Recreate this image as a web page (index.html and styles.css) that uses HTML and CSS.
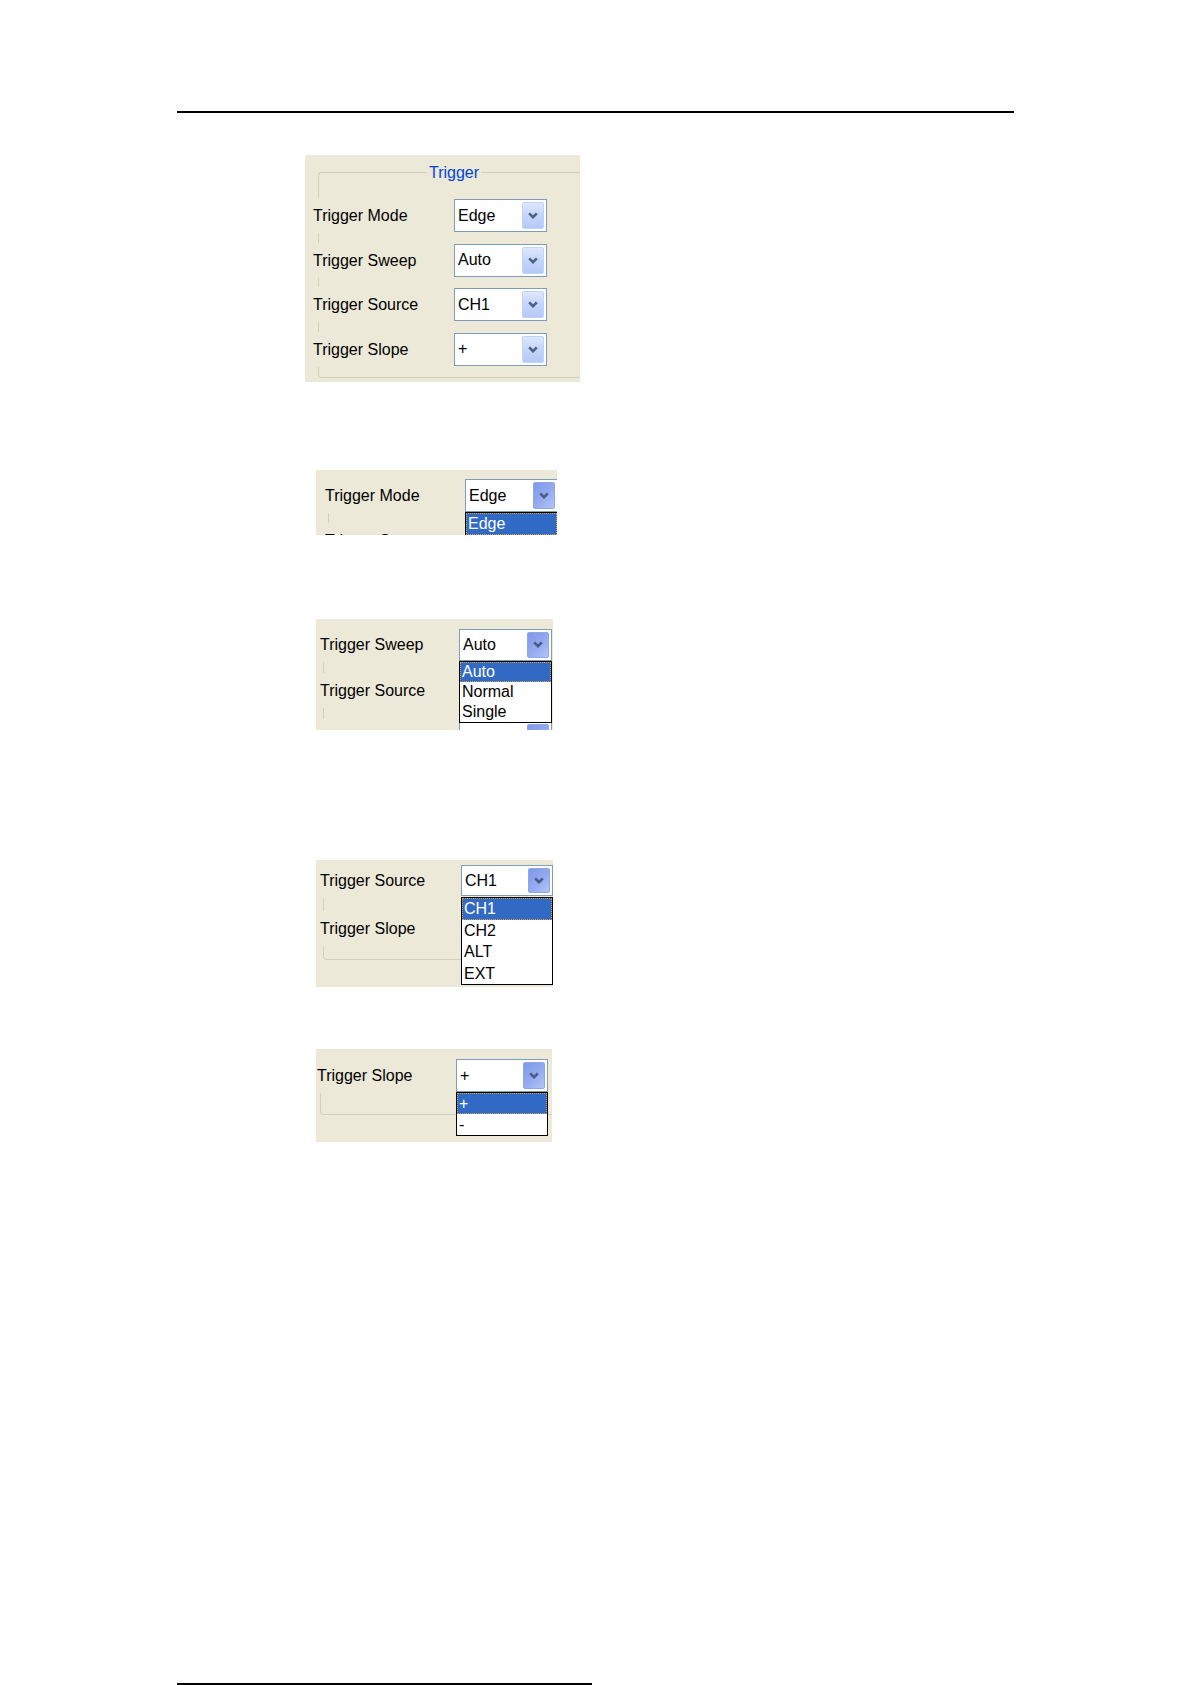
FILE: index.html
```html
<!DOCTYPE html>
<html>
<head>
<meta charset="utf-8">
<link rel="stylesheet" href="styles.css">
</head>
<body>
<div class="page">
  <div class="rule"></div>

  <div class="fig f1">
    <div class="gbox">
      <div class="gtitle">Trigger</div>
      <div class="rows">
        <div class="row"><span class="lbl">Trigger Mode</span><div class="sel"><span class="val">Edge</span><span class="btn"><svg width="10" height="7" viewBox="0 0 10 7"><polyline points="1.2,1.3 5,5.2 8.8,1.3" fill="none" stroke="#4d6185" stroke-width="2.6"/></svg></span></div></div>
        <div class="row"><span class="lbl">Trigger Sweep</span><div class="sel"><span class="val">Auto</span><span class="btn"><svg width="10" height="7" viewBox="0 0 10 7"><polyline points="1.2,1.3 5,5.2 8.8,1.3" fill="none" stroke="#4d6185" stroke-width="2.6"/></svg></span></div></div>
        <div class="row"><span class="lbl">Trigger Source</span><div class="sel"><span class="val">CH1</span><span class="btn"><svg width="10" height="7" viewBox="0 0 10 7"><polyline points="1.2,1.3 5,5.2 8.8,1.3" fill="none" stroke="#4d6185" stroke-width="2.6"/></svg></span></div></div>
        <div class="row"><span class="lbl">Trigger Slope</span><div class="sel"><span class="val">+</span><span class="btn"><svg width="10" height="7" viewBox="0 0 10 7"><polyline points="1.2,1.3 5,5.2 8.8,1.3" fill="none" stroke="#4d6185" stroke-width="2.6"/></svg></span></div></div>
      </div>
    </div>
  </div>

  <div class="fig f2">
    <div class="gbox">
      <div class="rows">
        <div class="row"><span class="lbl">Trigger Mode</span><div class="sel"><span class="val">Edge</span><span class="btn pressed"><svg width="10" height="7" viewBox="0 0 10 7"><polyline points="1.2,1.3 5,5.2 8.8,1.3" fill="none" stroke="#4a5c86" stroke-width="2.6"/></svg></span>
          <div class="list"><div class="opt on">Edge</div></div></div></div>
        <div class="row"><span class="lbl">Trigger Sweep</span><div class="sel"><span class="val">Auto</span><span class="btn"></span></div></div>
      </div>
    </div>
  </div>

  <div class="fig f3">
    <div class="gbox">
      <div class="rows">
        <div class="row"><span class="lbl">Trigger Sweep</span><div class="sel"><span class="val">Auto</span><span class="btn pressed"><svg width="10" height="7" viewBox="0 0 10 7"><polyline points="1.2,1.3 5,5.2 8.8,1.3" fill="none" stroke="#4a5c86" stroke-width="2.6"/></svg></span>
          <div class="list"><div class="opt on">Auto</div><div class="opt">Normal</div><div class="opt">Single</div></div></div></div>
        <div class="row"><span class="lbl">Trigger Source</span><div class="sel"><span class="val">CH1</span><span class="btn"></span></div></div>
        <div class="row"><span class="lbl">Trigger Slope</span><div class="sel"><span class="val">+</span><span class="btn pressed"></span></div></div>
      </div>
    </div>
  </div>

  <div class="fig f4">
    <div class="gbox">
      <div class="rows">
        <div class="row"><span class="lbl">Trigger Source</span><div class="sel"><span class="val">CH1</span><span class="btn pressed"><svg width="10" height="7" viewBox="0 0 10 7"><polyline points="1.2,1.3 5,5.2 8.8,1.3" fill="none" stroke="#4a5c86" stroke-width="2.6"/></svg></span>
          <div class="list"><div class="opt on">CH1</div><div class="opt">CH2</div><div class="opt">ALT</div><div class="opt">EXT</div></div></div></div>
        <div class="row"><span class="lbl">Trigger Slope</span><div class="sel"><span class="val">+</span><span class="btn"></span></div></div>
      </div>
    </div>
  </div>

  <div class="fig f5">
    <div class="gbox">
      <div class="rows">
        <div class="row"><span class="lbl">Trigger Slope</span><div class="sel"><span class="val">+</span><span class="btn pressed"><svg width="10" height="7" viewBox="0 0 10 7"><polyline points="1.2,1.3 5,5.2 8.8,1.3" fill="none" stroke="#4a5c86" stroke-width="2.6"/></svg></span>
          <div class="list"><div class="opt on">+</div><div class="opt">-</div></div></div></div>
      </div>
    </div>
  </div>

  <div class="footrule"></div>
</div>
</body>
</html>
```

FILE: styles.css
```css
body {
  margin: 0;
  background: #fff;
  font-family: "Liberation Sans", Arial, sans-serif;
  font-size: 16px;
  color: #000;
}
.page {
  padding-top: 111px;
}
.rule {
  margin-left: 177px;
  width: 837px;
  height: 2px;
  background: #000;
}
.fig {
  background: #ece9d8;
  overflow: hidden;
  position: relative;
}
.gbox {
  border: 1px solid #d0d0bf;
  border-right: none;
  margin-right: -40px;
}
.gtitle {
  width: fit-content;
  margin: -9px 0 0 108px;
  padding: 0 2px;
  background: #ece9d8;
  color: #0046d5;
  line-height: 18px;
}
.rows {
  display: flex;
  flex-direction: column;
}
.row {
  display: grid;
  align-items: center;
}
.lbl {
  justify-self: start;
  background: #ece9d8;
  height: 35px;
  line-height: 35px;
  margin: -1px 0;
  white-space: nowrap;
}
.sel {
  position: relative;
  box-sizing: border-box;
  height: 33px;
  border: 1px solid #7f9db9;
  background: #fff;
  display: flex;
  align-items: stretch;
  padding: 2px 2px 2px 3px;
}
.val {
  flex: 1;
  display: flex;
  align-items: center;
  white-space: nowrap;
}
.btn {
  width: 22px;
  box-sizing: border-box;
  border: 1px solid #c3d3f8;
  border-radius: 2px;
  background: linear-gradient(180deg, #dde7fe 0%, #c7d7fb 45%, #b5c9f7 100%);
  display: flex;
  align-items: center;
  justify-content: center;
}
.btn.pressed {
  border-color: #8fa6ea;
  background: linear-gradient(135deg, #7f99ea 0%, #94abf0 55%, #b3c5f6 100%);
}
.list {
  position: absolute;
  left: -1px;
  right: -1px;
  top: calc(100% + 1px);
  background: #fff;
  border: 1px solid #000;
  z-index: 2;
}
.opt {
  height: 20px;
  line-height: 20px;
  padding-left: 2px;
  white-space: nowrap;
}
.opt.on {
  background: #316ac5;
  color: #fff;
  outline: 1px dotted #d8a040;
  outline-offset: -1px;
}

/* figure 1: full group box */
.f1 {
  margin: 42px 0 0 305px;
  width: 275px;
  height: 227px;
}
.f1 .gbox {
  margin-top: 17px;
  margin-left: 13px;
  height: 204px;
  border-radius: 4px 0 0 4px;
}
.f1 .rows {
  margin: 17px 0 0 -6px;
  gap: 11.5px;
}
.f1 .row {
  grid-template-columns: 141px 93px;
}

/* figure 2 */
.f2 {
  margin: 88px 0 0 316px;
  width: 241px;
  height: 65px;
}
.f2 .gbox {
  margin-left: 12px;
  border-top: none;
  height: 200px;
}
.f2 .rows {
  margin: 9px 0 0 -4px;
  gap: 11.5px;
}
.f2 .row {
  grid-template-columns: 140px 93px;
}
.f2 .opt {
  height: 22px;
  line-height: 22px;
}

/* figure 3 */
.f3 {
  margin: 84px 0 0 316px;
  width: 237px;
  height: 111px;
}
.f3 .gbox {
  margin-left: 7px;
  border-top: none;
  height: 200px;
}
.f3 .rows {
  margin: 9px 0 0 -4px;
  gap: 13px;
}
.f3 .row {
  grid-template-columns: 139px 93px;
}
.f3 .sel {
  height: 32px;
}

/* figure 4 */
.f4 {
  margin: 130px 0 0 316px;
  width: 237px;
  height: 127px;
}
.f4 .gbox {
  margin-left: 7px;
  border-top: none;
  height: 95px;
  border-radius: 0 0 0 4px;
}
.f4 .rows {
  margin: 4px 0 0 -4px;
  gap: 15px;
}
.f4 .row {
  grid-template-columns: 141px 92px;
}
.f4 .sel {
  height: 31px;
}
.f4 .list {
  top: calc(100% + 2px);
}
.f4 .opt {
  height: 21.5px;
  line-height: 21.5px;
}

/* figure 5 */
.f5 {
  margin: 62px 0 0 316px;
  width: 236px;
  height: 93px;
}
.f5 .gbox {
  margin-left: 4px;
  border-top: none;
  height: 55px;
  border-radius: 0 0 0 4px;
}
.f5 .rows {
  margin: 10px 0 0 -4px;
}
.f5 .row {
  grid-template-columns: 139px 92px;
}
.f5 .opt {
  height: 21px;
  line-height: 21px;
}

.footrule {
  margin: 541px 0 0 177px;
  width: 415px;
  height: 2px;
  background: #000;
}
```
